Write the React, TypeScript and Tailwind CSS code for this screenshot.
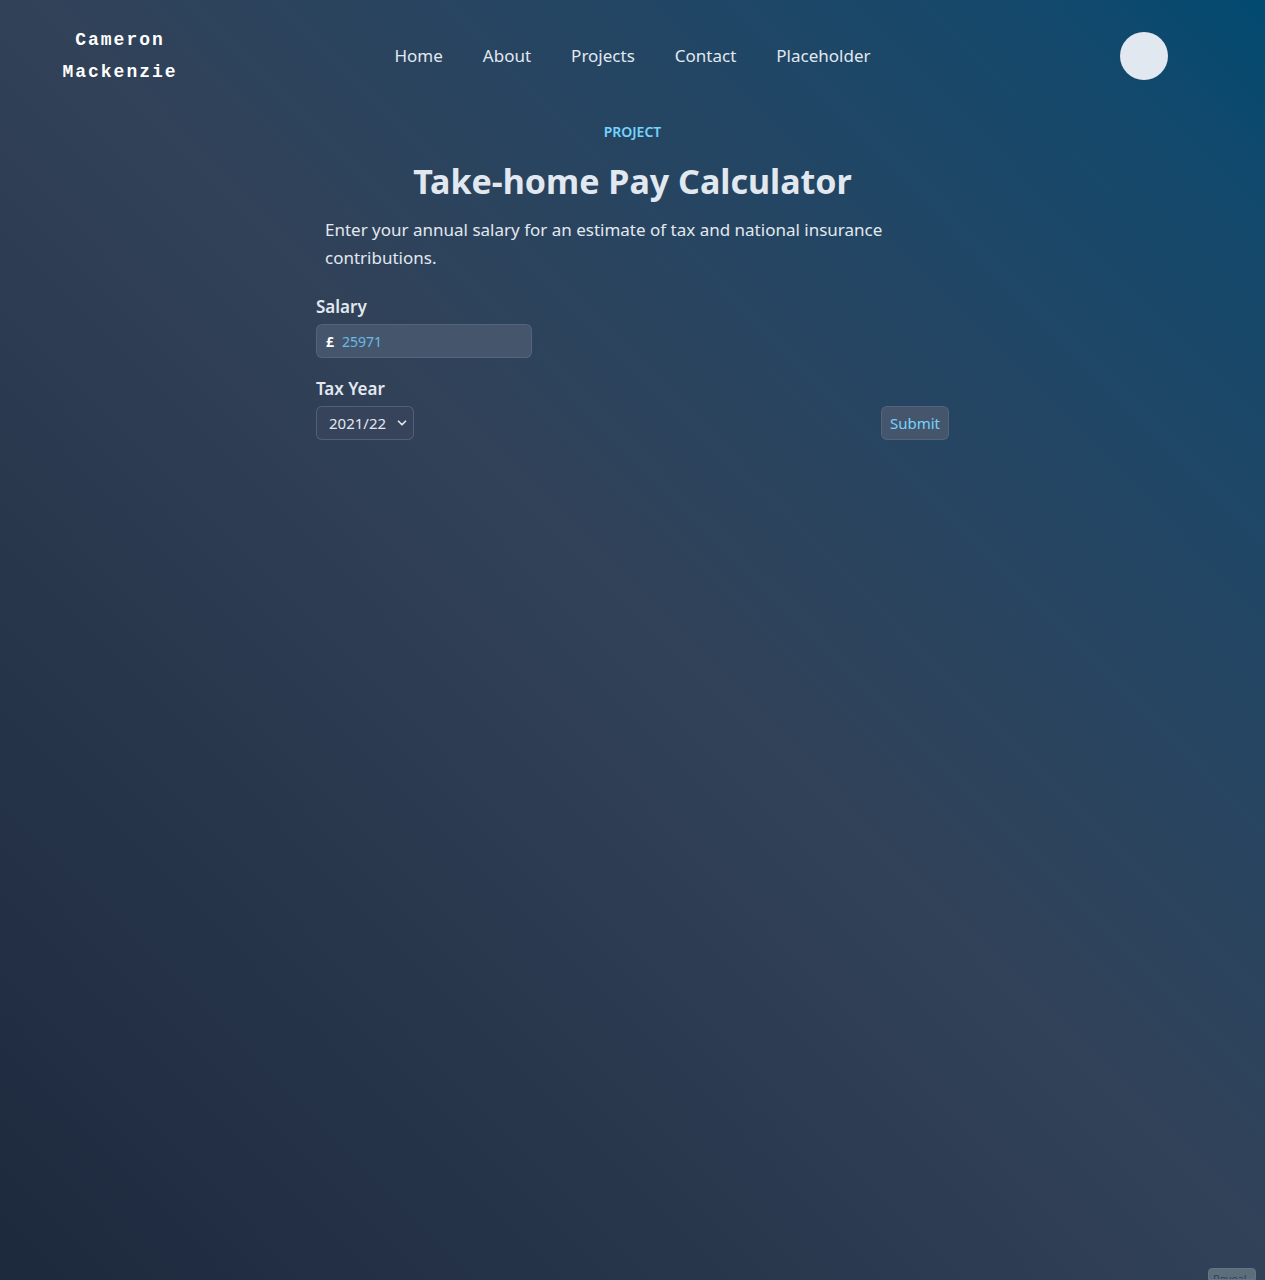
import { ChevronDown } from 'lucide-react';

const links = ['Home', 'About', 'Projects', 'Contact', 'Placeholder'];

export default function App() {
  return (
    <div className="relative min-h-screen bg-linear-to-tr from-slate-800 via-slate-700 to-sky-900 text-slate-200 font-['Noto_Sans',sans-serif]">
      <header className="grid grid-cols-[1fr_auto_1fr] items-center px-[62px] pt-[24px]">
        <div className="w-[116px] text-center font-['Liberation_Mono',monospace] text-[18px] font-bold leading-8 tracking-[2px] text-white">
          Cameron
          <br />
          Mackenzie
        </div>
        <nav className="flex gap-10 text-[17px] text-slate-200">
          {links.map((l) => (
            <a key={l} href="#" className="hover:text-sky-300">
              {l}
            </a>
          ))}
        </nav>
        <div className="flex justify-end pr-[35px]">
          <div className="h-12 w-12 rounded-full bg-slate-200" />
        </div>
      </header>

      <main className="mx-auto w-[633px] pt-[33px]">
        <p className="text-center text-[14px] font-semibold uppercase text-sky-300">Project</p>
        <h1 className="mt-[19px] text-center text-[34px] font-bold leading-10 text-slate-200">
          Take-home Pay Calculator
        </h1>
        <p className="mt-[15px] max-w-[600px] px-[9px] text-[17px] leading-7 text-slate-200">
          Enter your annual salary for an estimate of tax and national insurance contributions.
        </p>

        <form className="mt-[23px]">
          <label className="block text-[17px] font-semibold leading-6 text-slate-200">Salary</label>
          <div className="mt-[5px] flex h-[34px] w-[216px] items-center rounded-md border border-slate-500/50 bg-slate-600 px-[9px] text-[14px]">
            <span className="font-bold text-white">£</span>
            <span className="ml-[8px] text-sky-300/80">25971</span>
          </div>

          <label className="mt-[19px] block text-[17px] font-semibold leading-6 text-slate-200">Tax Year</label>
          <div className="mt-[5px] flex items-center justify-between">
            <div className="flex h-[34px] w-[98px] items-center justify-between rounded-md border border-slate-500/60 bg-[#36435a] pl-[12px] pr-[4px] text-[15px] text-slate-200">
              <span>2021/22</span>
              <ChevronDown className="h-[14px] w-[14px]" strokeWidth={3} />
            </div>
            <button
              type="button"
              className="h-[34px] w-[68px] rounded-md border border-slate-500/50 bg-slate-600 text-[15px] text-sky-300"
            >
              Submit
            </button>
          </div>
        </form>
      </main>

      <div className="absolute bottom-0 right-[9px] h-3 w-12 overflow-hidden rounded-t-sm border border-slate-500 bg-[#5b6f7a] px-1 text-[11px] leading-5 text-slate-700">
        Reveal
      </div>
    </div>
  );
}
